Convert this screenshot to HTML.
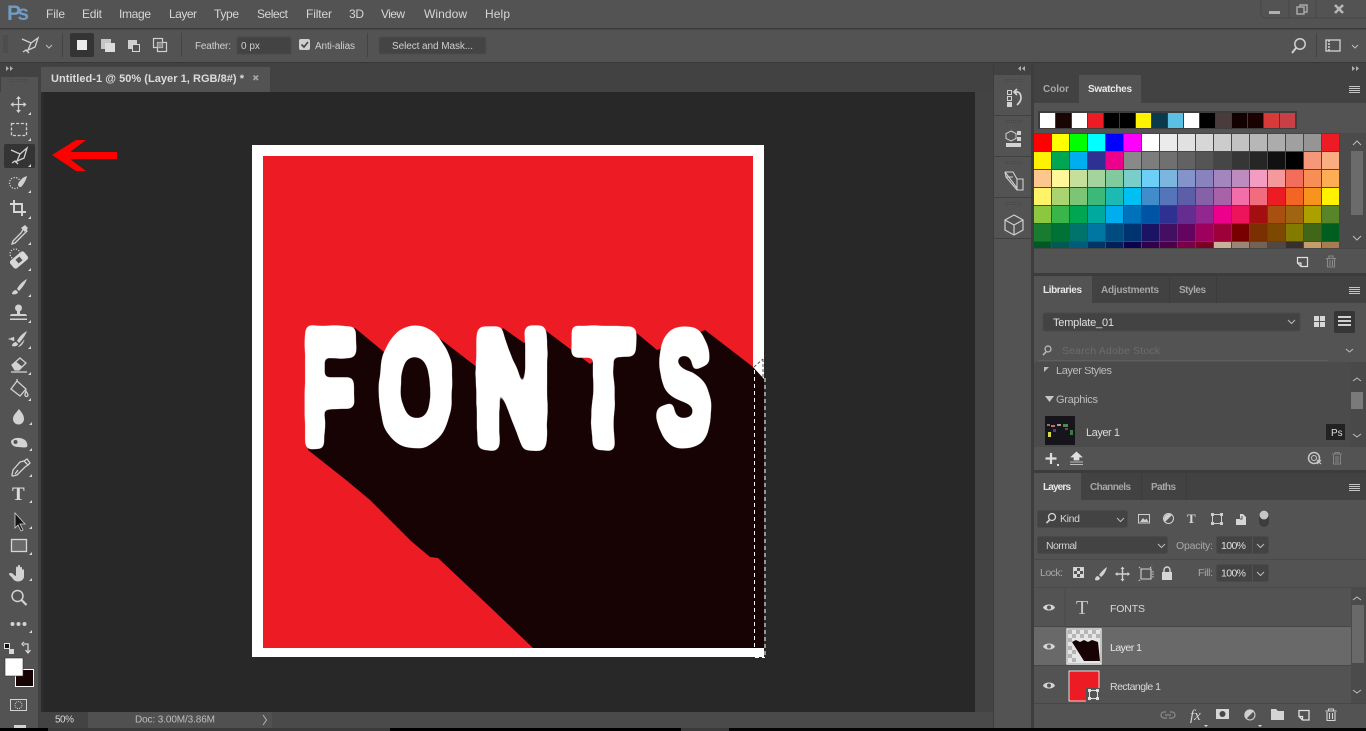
<!DOCTYPE html>
<html><head><meta charset="utf-8"><title>Photoshop</title>
<style>
html,body{margin:0;padding:0;background:#535353;overflow:hidden}
svg{display:block;position:absolute;left:0;top:0}
text{font-family:"Liberation Sans",sans-serif;font-size:11px;fill:#d4d4d4}
.m{font-size:12px;fill:#d6d6d6}
.o{font-size:10px;fill:#cfcfcf}
.d{font-size:10px;font-weight:bold;fill:#a6a6a6}
.a{font-size:10px;font-weight:bold;fill:#e8e8e8}
.i{fill:none;stroke:#d2d2d2;stroke-width:1.3}
.f{fill:#d2d2d2}
.c{fill:none;stroke:#bdbdbd;stroke-width:1}
.L{font-size:160px;font-weight:bold;fill:#fff;stroke:#fff;stroke-width:14px;stroke-linejoin:round}
</style></head><body>
<svg width="1366" height="731" viewBox="0 0 1366 731" xmlns="http://www.w3.org/2000/svg">
<defs>
<filter id="w" x="280" y="300" width="460" height="170" filterUnits="userSpaceOnUse" color-interpolation-filters="sRGB">
<feTurbulence type="fractalNoise" baseFrequency="0.03" numOctaves="2" seed="4" result="n"/>
<feDisplacementMap in="SourceGraphic" in2="n" scale="5" xChannelSelector="R" yChannelSelector="G" result="d"/>
<feGaussianBlur in="d" stdDeviation="2.6"/>
<feComponentTransfer><feFuncA type="linear" slope="10" intercept="-4.5"/></feComponentTransfer>
</filter>
</defs>
<!-- base -->
<rect width="1366" height="731" fill="#535353"/>
<rect x="0" y="28" width="1366" height="1.5" fill="#3c3c3c"/>
<rect x="0" y="62" width="1366" height="1.5" fill="#383838"/>
<rect x="0" y="63" width="1033" height="29" fill="#424242"/>
<rect x="0" y="63" width="38" height="14" fill="#424242"/>
<rect x="1" y="77" width="37" height="651" fill="#535353"/>
<rect x="38" y="77" width="3" height="651" fill="#424242"/>
<rect x="41" y="92" width="934" height="620" fill="#282828"/>
<rect x="41" y="92" width="3" height="620" fill="#2c2c2c"/>
<rect x="975" y="92" width="18" height="620" fill="#434343"/>
<rect x="41" y="67" width="229" height="25" fill="#535353"/>
<rect x="41" y="712" width="47" height="16" fill="#434343"/>
<rect x="88" y="712" width="184" height="16" fill="#505050"/>
<rect x="272" y="712" width="721" height="16" fill="#4a4a4a"/>
<!-- menu -->
<text x="7" y="20" style="font-size:21px;font-weight:bold;fill:#6f9cc4" textLength="22">Ps</text>
<text class="m" x="46" y="18" textLength="19">File</text>
<text class="m" x="82" y="18" textLength="20">Edit</text>
<text class="m" x="119" y="18" textLength="32">Image</text>
<text class="m" x="169" y="18" textLength="28">Layer</text>
<text class="m" x="214" y="18" textLength="25">Type</text>
<text class="m" x="257" y="18" textLength="31">Select</text>
<text class="m" x="306" y="18" textLength="26">Filter</text>
<text class="m" x="349" y="18" textLength="15">3D</text>
<text class="m" x="381" y="18" textLength="24">View</text>
<text class="m" x="424" y="18" textLength="43">Window</text>
<text class="m" x="485" y="18" textLength="25">Help</text>
<!-- window controls -->
<path d="M1261 0V13a5 5 0 0 0 5 5H1366M1289 0V18M1316 0V18" fill="none" stroke="#474747"/>
<rect x="1269" y="11" width="11" height="3" fill="#b0b0b0"/>
<path d="M1297 7h7v7h-7zM1300 7V5h7v7h-3" fill="none" stroke="#a8a8a8" stroke-width="1.5"/>
<path d="M1335 5l8 8M1343 5l-8 8" stroke="#b5b5b5" stroke-width="2.6"/>
<!-- options bar -->
<path d="M3 36h5M3 38h5M3 40h5M3 42h5M3 44h5M3 46h5M3 48h5M3 50h5M3 52h5" stroke="#474747"/>
<path d="M22 39l9 4 7-5-3 9-9 4M31 43l-3 7M23 52l3-2 3 3" class="i" stroke-width="1.1"/>
<path d="M46 45l3 3 3-3" class="c"/>
<rect x="62" y="33" width="1" height="24" fill="#434343"/>
<rect x="70" y="33" width="24" height="24" rx="2" fill="#343434"/>
<rect x="77" y="40" width="10" height="10" fill="#ececec"/>
<rect x="101" y="39" width="10" height="10" fill="#c6c6c6"/>
<rect x="105" y="43" width="10" height="9" fill="#dcdcdc"/>
<rect x="128" y="40" width="9" height="9" fill="#d0d0d0"/>
<rect x="132.500" y="44.500" width="7" height="7" fill="#535353" stroke="#d8d8d8"/>
<rect x="153.500" y="38.500" width="9" height="9" fill="none" stroke="#d0d0d0" stroke-width="1.2"/>
<rect x="157.500" y="42.500" width="9" height="9" fill="none" stroke="#d0d0d0" stroke-width="1.2"/>
<rect x="157.500" y="42.500" width="5" height="5" fill="#8a8a8a"/>
<rect x="181" y="33" width="1" height="24" fill="#434343"/>
<text class="o" x="195" y="49" textLength="36">Feather:</text>
<rect x="237" y="37" width="54" height="17" rx="2" fill="#434343" stroke="#4a4a4a"/>
<text class="o" x="241" y="49">0 px</text>
<rect x="299" y="39" width="11" height="11" rx="2" fill="#cfcfcf"/>
<path d="M301.500 44.500l2.500 2.500 4-5" fill="none" stroke="#454545" stroke-width="1.6"/>
<text class="o" x="315" y="49" textLength="40">Anti-alias</text>
<rect x="367" y="33" width="1" height="24" fill="#434343"/>
<rect x="379" y="37" width="107" height="17" rx="2" fill="#444444" stroke="#4c4c4c"/>
<text class="o" x="392" y="49" textLength="81">Select and Mask...</text>
<circle cx="1300" cy="44" r="5.200" fill="none" stroke="#cfcfcf" stroke-width="1.500"/>
<path d="M1296 48l-4 5" stroke="#cfcfcf" stroke-width="2"/>
<rect x="1316" y="33" width="1" height="24" fill="#434343"/>
<rect x="1326" y="40" width="14" height="11" fill="none" stroke="#d4d4d4" stroke-width="1.3"/>
<path d="M1329 40v11" stroke="#d4d4d4" stroke-width="1.5" stroke-dasharray="2 1"/>
<path d="M1352 45l3 3 3-3" class="c"/>
<!-- arrows strip -->
<path d="M6 66l3 2.500-3 2.500zM10 66l3 2.500-3 2.500z" fill="#b0b0b0"/>
<path d="M1352 66l3 2.500-3 2.500zM1356 66l3 2.500-3 2.500z" fill="#b0b0b0"/>
<path d="M10 79.500h18M10 81.500h18" stroke="#474747" stroke-dasharray="1 1"/>
<!-- tab -->
<text x="51" y="82" style="font-size:11px;font-weight:bold;fill:#dcdcdc" textLength="193">Untitled-1 @ 50% (Layer 1, RGB/8#) *</text>
<path d="M253.500 75.500l4.500 4.500M258 75.500l-4.500 4.500" stroke="#a4a4a4" stroke-width="1.700"/>
<!-- canvas -->
<rect x="252" y="145" width="512" height="512" fill="#fff"/>
<rect x="263" y="156" width="490" height="492" fill="#ed1c24"/>
<polygon fill="#170204" points="308,450 346,480 370,500 411,541 430,557 438,558 490,607 533,648 764,648 764,379 753,367 705,330 657,350 633,330 590,364 545,330 524,343 503,328 478,368 430,331 384,352 355,328 320,340"/>
<g filter="url(#w)">
<text class="L" transform="translate(329,443) scale(.53,1)" text-anchor="middle">F</text>
<text class="L" transform="translate(415.500,441) scale(.59,.97)" text-anchor="middle">O</text>
<text class="L" transform="translate(512,443) scale(.65,1)" text-anchor="middle">N</text>
<text class="L" transform="translate(603.500,443) scale(.6,1)" text-anchor="middle">T</text>
<text class="L" transform="translate(684.500,441) scale(.5,.97)" text-anchor="middle">S</text>
</g>
<path d="M754.500 370V657M765 378V657M755 657.500H765" fill="none" stroke="#fff" stroke-dasharray="4 3"/>
<path d="M754 367l9-8M763 359v18" fill="none" stroke="#555" stroke-dasharray="3 2"/>
<!-- red arrow -->
<polygon fill="#fe0000" points="52,155 76,140 86,140 70,152 117,152 117,159 70,159 86,171 76,171"/>
<!-- tools -->
<rect x="4" y="144" width="31" height="24" rx="2" fill="#343434"/>
<path d="M18.500 97v15M11 104.500h15" class="i" stroke-width="2"/>
<path d="M18.500 96l-2.500 3h5zM18.500 113l-2.500-3h5zM10.500 104.500l3-2.500v5zM26.500 104.500l-3-2.500v5z" class="f"/>
<rect x="11.500" y="123.500" width="15" height="12" fill="none" stroke="#d2d2d2" stroke-width="1.300" stroke-dasharray="3 1.700"/>
<path d="M11 150l9 4 7-6-3 10-9 4M20 154l-3 7M12 163l3-2 3 3" class="i" stroke-width="1.1"/>
<circle cx="15" cy="183" r="5.500" fill="none" stroke="#e0e0e0" stroke-width="1.200" stroke-dasharray="1.200 1.500"/>
<path d="M27 176c-4 1-7 4-9 8 0 2 1 3 3 3 3-3 5-7 6-11z" class="f"/>
<path d="M14 200v12h12M10 204h12v12" fill="none" stroke="#d8d8d8" stroke-width="1.900"/>
<path d="M24 228l3 3-3 3-1 1-8 8-3 1 1-3 8-8z" fill="none" stroke="#d4d4d4" stroke-width="1.300"/>
<path d="M21 228l4-3 3 3-3 4z" class="f"/>
<circle cx="15" cy="254" r="5" fill="none" stroke="#e0e0e0" stroke-width="1.100" stroke-dasharray="1.200 1.500"/>
<rect x="10" y="255" width="18" height="10" rx="2.500" fill="#d8d8d8" transform="rotate(-40 19 260)"/>
<rect x="16.500" y="257.500" width="5" height="5" fill="#535353" transform="rotate(-40 19 260)"/>
<path d="M27 279c-4 2-8 6-10 10l2 2c3-3 6-7 8-12zM16 290c-2 0-4 2-4 4 2 1 6 0 6-2z" class="f"/>
<circle cx="18.500" cy="308" r="3.500" class="f"/>
<path d="M17 310h3v4h5c1 0 2 1 2 2H10c0-1 1-2 2-2h5zM10 318.500h17v1.500H10z" class="f"/>
<path d="M27 331c-4 2-8 6-10 10l2 2c3-3 6-7 8-12zM16 342c-2 0-4 2-4 4 2 1 6 0 6-2z" class="f"/>
<path d="M9 339l5-2v4zM24 340a9 9 0 0 1-6 7" fill="#d2d2d2" stroke="#d2d2d2" stroke-dasharray="1 1" stroke-width=".8"/>
<path d="M12 365l8-7 6 5-7 7h-4z" class="i"/>
<path d="M12 365l4-3.500 6 5-3 3.500h-4z" class="f"/>
<path d="M11 372h16" class="i"/>
<path d="M17 381l9 8-6 7-9-7z" class="i"/>
<path d="M17 381v-2M26 391c1 2 2 3 2 4a1.500 1.500 0 0 1-3 0c0-1 0-2 1-4z" class="i"/>
<path d="M19 409c3 4 5 6 5 10a5.500 5.500 0 0 1-11 0c0-4 3-6 6-10z" class="f"/>
<path d="M11 441c3-4 10-4 14-1 2 2 3 5 2 7-3 1-6 0-9 0-4 0-7-2-7-6z" class="f"/>
<circle cx="15.500" cy="442" r="2" fill="#535353"/>
<path d="M24 461l4 4-3 2-8 8-4 1c-1 0-1 0-1-1l1-5 7-8z" class="i"/>
<path d="M15 474l3-4M24 461l3-2 3 4-2 2" class="i"/>
<text x="12" y="500" style="font-family:'Liberation Serif',serif;font-size:19px;font-weight:bold;fill:#dadada">T</text>
<path d="M15 513v15l3-3 3 6 2-1-3-6h5z" fill="#151515" stroke="#d4d4d4" stroke-width=".8"/>
<rect x="11.500" y="539.500" width="15" height="12" fill="#6a6a6a" stroke="#d6d6d6" stroke-width="1.300"/>
<path d="M12 573c1 1 3 3 4 3v-8c0-2 2-2 2 0v-2c0-1.500 2-1.500 2 0v2c0-1.500 2-1.500 2 0v2c0-1 2-1 2 .5v6c0 3-3 5-6 5s-5-2-6-4l-3-3c0-2 2-2 3-1z" class="f"/>
<circle cx="17.500" cy="596" r="5.500" fill="none" stroke="#d2d2d2" stroke-width="1.500"/>
<path d="M21.500 600l5 5" stroke="#d2d2d2" stroke-width="2.200"/>
<circle cx="12.500" cy="624" r="2" class="f"/><circle cx="18.500" cy="624" r="2" class="f"/><circle cx="24.500" cy="624" r="2" class="f"/>
<g fill="#d8d8d8">
<path d="M31 112l-3 3h3zM31 138l-3 3h3zM31 164l-3 3h3zM31 190l-3 3h3zM31 216l-3 3h3zM31 242l-3 3h3zM31 268l-3 3h3zM31 294l-3 3h3zM31 320l-3 3h3zM31 346l-3 3h3zM31 372l-3 3h3zM31 398l-3 3h3zM32 422l-3 3h3zM32 448l-3 3h3zM32 474l-3 3h3zM32 500l-3 3h3zM32 526l-3 3h3zM32 552l-3 3h3zM32 578l-3 3h3zM32 630l-3 3h3z"/>
</g>
<rect x="9" y="649" width="5" height="5" fill="#d8d8d8"/>
<path d="M4.500 643.500h5v5h-5z" fill="#111" stroke="#e2e2e2"/>
<path d="M24 644h4v8M25.500 650l2.500 3 2.500-3M24 642l-2 2 2 2" fill="none" stroke="#d6d6d6" stroke-width="1.300"/>
<rect x="15.500" y="669.500" width="18" height="17" fill="#170204" stroke="#fff"/>
<rect x="5" y="658" width="18" height="18" fill="#fff" stroke="#333" stroke-width=".6"/>
<rect x="10.500" y="699.500" width="16" height="11" fill="none" stroke="#d2d2d2"/>
<circle cx="18.500" cy="705" r="3.500" fill="none" stroke="#d2d2d2" stroke-dasharray="1 1"/>
<rect x="14" y="725" width="12" height="3" fill="#d2d2d2"/>
<!-- status -->
<text class="o" x="55" y="722.500" style="fill:#d8d8d8" textLength="19">50%</text>
<text class="o" x="135" y="722.500" style="fill:#bdbdbd" textLength="80">Doc: 3.00M/3.86M</text>
<path d="M263 715l3.500 5-3.500 5" fill="none" stroke="#b4b4b4"/>
<!-- dock -->
<rect x="993" y="63" width="40" height="665" fill="#535353"/>
<rect x="993" y="63" width="40" height="12" fill="#424242"/>
<rect x="1031" y="63" width="3" height="665" fill="#3d3d3d"/>
<path d="M993.500 63V728" stroke="#3d3d3d"/>
<path d="M994 115.500h37M994 156.500h37M994 197.500h37M994 238.500h37" stroke="#404040"/>
<path d="M1005 79.500h18M1005 81.500h18M1005 120.500h18M1005 122.500h18M1005 161.500h18M1005 163.500h18M1005 202.500h18M1005 204.500h18" stroke="#474747" stroke-dasharray="1 1"/>
<path d="M1025 66l-3 2.500 3 2.500zM1021 66l-3 2.500 3 2.500z" fill="#b0b0b0"/>
<rect x="1007.500" y="90.500" width="4" height="4" fill="none" stroke="#d2d2d2"/><rect x="1007.500" y="96.500" width="4" height="4" fill="none" stroke="#d2d2d2"/><rect x="1007" y="102" width="5" height="5" fill="#d2d2d2"/>
<path d="M1015 92h3c2 1 3 3 3 6 0 3-2 5-4 7M1017 89l-3 3 3 3" fill="none" stroke="#d2d2d2" stroke-width="1.700"/>
<path d="M1011 131l5 2.500v5l-5 2.500-5-2.500v-5z" fill="none" stroke="#d2d2d2"/>
<rect x="1017" y="131" width="4" height="4" fill="#d2d2d2"/><rect x="1017" y="137" width="4" height="4" fill="#d2d2d2"/>
<rect x="1006" y="143" width="15" height="4" fill="#d2d2d2"/>
<path d="M1005 172h8l4 7M1005 172l1 5 11 13h6v-11h-6v11M1005 172l12 16M1006 177l7 0" fill="none" stroke="#d2d2d2" stroke-width="1.100"/>
<path d="M1014 215l9 5v10l-9 5-9-5v-10zM1005 220l9 5 9-5M1014 225v10" fill="none" stroke="#cfcfcf" stroke-width="1.200"/>
<!-- panels general -->
<rect x="1034" y="63" width="332" height="12" fill="#424242"/>
<path d="M1352 66l3 2.500-3 2.500zM1356 66l3 2.500-3 2.500z" fill="#b0b0b0"/>
<rect x="1034" y="75" width="332" height="28" fill="#424242"/>
<rect x="1079" y="75" width="62" height="28" fill="#535353"/>
<text class="d" x="1043" y="92" textLength="26">Color</text>
<text class="a" x="1088" y="92" textLength="44">Swatches</text>
<path d="M1349 86.500h11M1349 88.500h11M1349 90.500h11M1349 92.500h11" stroke="#c4c4c4"/>
<rect x="1038" y="111" width="259" height="18" fill="#3d3d3d"/>
<g>
<rect x="1040" y="113" width="15" height="15" fill="#fff"/><rect x="1056" y="113" width="15" height="15" fill="#1a0505"/><rect x="1072" y="113" width="15" height="15" fill="#fff"/><rect x="1088" y="113" width="15" height="15" fill="#ed1c24"/><rect x="1104" y="113" width="15" height="15" fill="#000"/><rect x="1120" y="113" width="15" height="15" fill="#000"/><rect x="1136" y="113" width="15" height="15" fill="#fff200"/><rect x="1152" y="113" width="15" height="15" fill="#0c3a4d"/><rect x="1168" y="113" width="15" height="15" fill="#5cc0e5"/><rect x="1184" y="113" width="15" height="15" fill="#fff"/><rect x="1200" y="113" width="15" height="15" fill="#000"/><rect x="1216" y="113" width="15" height="15" fill="#4a3c3c"/><rect x="1232" y="113" width="15" height="15" fill="#130000"/><rect x="1248" y="113" width="15" height="15" fill="#1a0202"/><rect x="1264" y="113" width="15" height="15" fill="#d83a3a"/><rect x="1280" y="113" width="15" height="15" fill="#c84046"/>
</g>
<rect x="1034" y="133" width="306" height="115" fill="#474747"/>
<g>
<rect x="1034" y="134" width="17" height="17" fill="#ff0000"/><rect x="1052" y="134" width="17" height="17" fill="#ffff00"/><rect x="1070" y="134" width="17" height="17" fill="#00ff00"/><rect x="1088" y="134" width="17" height="17" fill="#00ffff"/><rect x="1106" y="134" width="17" height="17" fill="#0000ff"/><rect x="1124" y="134" width="17" height="17" fill="#ff00ff"/><rect x="1142" y="134" width="17" height="17" fill="#ffffff"/><rect x="1160" y="134" width="17" height="17" fill="#ebebeb"/><rect x="1178" y="134" width="17" height="17" fill="#e1e1e1"/><rect x="1196" y="134" width="17" height="17" fill="#d7d7d7"/><rect x="1214" y="134" width="17" height="17" fill="#cccccc"/><rect x="1232" y="134" width="17" height="17" fill="#c2c2c2"/><rect x="1250" y="134" width="17" height="17" fill="#b7b7b7"/><rect x="1268" y="134" width="17" height="17" fill="#acacac"/><rect x="1286" y="134" width="17" height="17" fill="#a0a0a0"/><rect x="1304" y="134" width="17" height="17" fill="#959595"/><rect x="1322" y="134" width="17" height="17" fill="#ed1c24"/>
<rect x="1034" y="152" width="17" height="17" fill="#fff200"/><rect x="1052" y="152" width="17" height="17" fill="#00a651"/><rect x="1070" y="152" width="17" height="17" fill="#00aeef"/><rect x="1088" y="152" width="17" height="17" fill="#2e3192"/><rect x="1106" y="152" width="17" height="17" fill="#ec008c"/><rect x="1124" y="152" width="17" height="17" fill="#898989"/><rect x="1142" y="152" width="17" height="17" fill="#7d7d7d"/><rect x="1160" y="152" width="17" height="17" fill="#707070"/><rect x="1178" y="152" width="17" height="17" fill="#626262"/><rect x="1196" y="152" width="17" height="17" fill="#555555"/><rect x="1214" y="152" width="17" height="17" fill="#464646"/><rect x="1232" y="152" width="17" height="17" fill="#363636"/><rect x="1250" y="152" width="17" height="17" fill="#262626"/><rect x="1268" y="152" width="17" height="17" fill="#111111"/><rect x="1286" y="152" width="17" height="17" fill="#000000"/><rect x="1304" y="152" width="17" height="17" fill="#f7977a"/><rect x="1322" y="152" width="17" height="17" fill="#fbad82"/>
<rect x="1034" y="170" width="17" height="17" fill="#fdc68c"/><rect x="1052" y="170" width="17" height="17" fill="#fff799"/><rect x="1070" y="170" width="17" height="17" fill="#c6df9c"/><rect x="1088" y="170" width="17" height="17" fill="#a4d49d"/><rect x="1106" y="170" width="17" height="17" fill="#81ca9d"/><rect x="1124" y="170" width="17" height="17" fill="#7bcdc9"/><rect x="1142" y="170" width="17" height="17" fill="#6ccff7"/><rect x="1160" y="170" width="17" height="17" fill="#7cb5dd"/><rect x="1178" y="170" width="17" height="17" fill="#8493ca"/><rect x="1196" y="170" width="17" height="17" fill="#8882be"/><rect x="1214" y="170" width="17" height="17" fill="#a286bd"/><rect x="1232" y="170" width="17" height="17" fill="#bc8cbf"/><rect x="1250" y="170" width="17" height="17" fill="#f49bc1"/><rect x="1268" y="170" width="17" height="17" fill="#f5999d"/><rect x="1286" y="170" width="17" height="17" fill="#f26d5b"/><rect x="1304" y="170" width="17" height="17" fill="#f68e55"/><rect x="1322" y="170" width="17" height="17" fill="#fdae55"/>
<rect x="1034" y="188" width="17" height="17" fill="#fff468"/><rect x="1052" y="188" width="17" height="17" fill="#aad372"/><rect x="1070" y="188" width="17" height="17" fill="#7cc576"/><rect x="1088" y="188" width="17" height="17" fill="#3cb878"/><rect x="1106" y="188" width="17" height="17" fill="#1bbbb4"/><rect x="1124" y="188" width="17" height="17" fill="#00bff3"/><rect x="1142" y="188" width="17" height="17" fill="#438ccb"/><rect x="1160" y="188" width="17" height="17" fill="#5574b9"/><rect x="1178" y="188" width="17" height="17" fill="#5c5fa8"/><rect x="1196" y="188" width="17" height="17" fill="#8561a8"/><rect x="1214" y="188" width="17" height="17" fill="#a863a8"/><rect x="1232" y="188" width="17" height="17" fill="#f26ea8"/><rect x="1250" y="188" width="17" height="17" fill="#f16d7e"/><rect x="1268" y="188" width="17" height="17" fill="#ed1c24"/><rect x="1286" y="188" width="17" height="17" fill="#f26522"/><rect x="1304" y="188" width="17" height="17" fill="#f7941d"/><rect x="1322" y="188" width="17" height="17" fill="#fff200"/>
<rect x="1034" y="206" width="17" height="17" fill="#8dc63f"/><rect x="1052" y="206" width="17" height="17" fill="#39b54a"/><rect x="1070" y="206" width="17" height="17" fill="#00a651"/><rect x="1088" y="206" width="17" height="17" fill="#00a99d"/><rect x="1106" y="206" width="17" height="17" fill="#00aeef"/><rect x="1124" y="206" width="17" height="17" fill="#0072bc"/><rect x="1142" y="206" width="17" height="17" fill="#0054a6"/><rect x="1160" y="206" width="17" height="17" fill="#2e3192"/><rect x="1178" y="206" width="17" height="17" fill="#662d91"/><rect x="1196" y="206" width="17" height="17" fill="#92278f"/><rect x="1214" y="206" width="17" height="17" fill="#ec008c"/><rect x="1232" y="206" width="17" height="17" fill="#ed145b"/><rect x="1250" y="206" width="17" height="17" fill="#a30e10"/><rect x="1268" y="206" width="17" height="17" fill="#a7500f"/><rect x="1286" y="206" width="17" height="17" fill="#a16410"/><rect x="1304" y="206" width="17" height="17" fill="#aba000"/><rect x="1322" y="206" width="17" height="17" fill="#588528"/>
<rect x="1034" y="224" width="17" height="17" fill="#197b30"/><rect x="1052" y="224" width="17" height="17" fill="#007236"/><rect x="1070" y="224" width="17" height="17" fill="#00746b"/><rect x="1088" y="224" width="17" height="17" fill="#0076a3"/><rect x="1106" y="224" width="17" height="17" fill="#004b80"/><rect x="1124" y="224" width="17" height="17" fill="#003471"/><rect x="1142" y="224" width="17" height="17" fill="#1b1464"/><rect x="1160" y="224" width="17" height="17" fill="#440e62"/><rect x="1178" y="224" width="17" height="17" fill="#630460"/><rect x="1196" y="224" width="17" height="17" fill="#9e005d"/><rect x="1214" y="224" width="17" height="17" fill="#9e0039"/><rect x="1232" y="224" width="17" height="17" fill="#790000"/><rect x="1250" y="224" width="17" height="17" fill="#7a3000"/><rect x="1268" y="224" width="17" height="17" fill="#7d4900"/><rect x="1286" y="224" width="17" height="17" fill="#827b00"/><rect x="1304" y="224" width="17" height="17" fill="#406618"/><rect x="1322" y="224" width="17" height="17" fill="#005e20"/>
<rect x="1034" y="242" width="17" height="6" fill="#005826"/><rect x="1052" y="242" width="17" height="6" fill="#005952"/><rect x="1070" y="242" width="17" height="6" fill="#005b7f"/><rect x="1088" y="242" width="17" height="6" fill="#003663"/><rect x="1106" y="242" width="17" height="6" fill="#002157"/><rect x="1124" y="242" width="17" height="6" fill="#0d004c"/><rect x="1142" y="242" width="17" height="6" fill="#32004b"/><rect x="1160" y="242" width="17" height="6" fill="#4b0049"/><rect x="1178" y="242" width="17" height="6" fill="#7b0046"/><rect x="1196" y="242" width="17" height="6" fill="#7a0026"/><rect x="1214" y="242" width="17" height="6" fill="#c7b299"/><rect x="1232" y="242" width="17" height="6" fill="#998675"/><rect x="1250" y="242" width="17" height="6" fill="#736357"/><rect x="1268" y="242" width="17" height="6" fill="#534741"/><rect x="1286" y="242" width="17" height="6" fill="#362f2d"/><rect x="1304" y="242" width="17" height="6" fill="#c69c6d"/><rect x="1322" y="242" width="17" height="6" fill="#a77c50"/>
</g>
<rect x="1340" y="133" width="26" height="115" fill="#4b4b4b"/>
<rect x="1351" y="151" width="12" height="64" fill="#6b6b6b"/>
<path d="M1353 145l4-4 4 4M1353 236l4 4 4-4" class="c" stroke="#7a7a7a"/>
<path d="M1034 248.500h332" stroke="#474747"/>
<path d="M1297.500 257.500h10v9h-6.500l-3.500-3.500zM1301 266v-3h-3.500" fill="none" stroke="#e0e0e0" stroke-width="1.200"/>
<path d="M1326 258.500h10M1329 258v-2h4v2M1327.500 259v8h7v-8M1330 260v6M1332.500 260v6" fill="none" stroke="#8a8a8a" stroke-width="1.100"/>
<rect x="1034" y="273" width="332" height="3" fill="#3c3c3c"/>
<!-- libraries -->
<rect x="1034" y="276" width="332" height="27" fill="#424242"/>
<rect x="1034" y="276" width="58" height="27" fill="#535353"/>
<path d="M1169.500 276v27M1216.500 276v27" stroke="#3c3c3c"/>
<text class="a" x="1043" y="293" textLength="39">Libraries</text>
<text class="d" x="1101" y="293" textLength="58">Adjustments</text>
<text class="d" x="1179" y="293" textLength="27">Styles</text>
<path d="M1349 287.500h11M1349 289.500h11M1349 291.500h11M1349 293.500h11" stroke="#c4c4c4"/>
<rect x="1043" y="313" width="257" height="18" rx="2" fill="#434343" stroke="#4a4a4a"/>
<text x="1053" y="326" style="font-size:11px;fill:#e0e0e0" textLength="61">Template_01</text>
<path d="M1288 320l3.500 3.500 3.500-3.500" class="c" stroke="#a0a0a0"/>
<path d="M1314 316h5v5h-5zM1320 316h5v5h-5zM1314 322h5v5h-5zM1320 322h5v5h-5z" fill="#d8d8d8"/>
<rect x="1334" y="311" width="21" height="22" rx="2" fill="#363636"/>
<path d="M1338 317h13M1338 321h13M1338 325h13" stroke="#e6e6e6" stroke-width="1.800"/>
<circle cx="1048" cy="349" r="3" fill="none" stroke="#c0c0c0" stroke-width="1.200"/>
<path d="M1046 352l-3 3" stroke="#c0c0c0" stroke-width="1.500"/>
<text x="1062" y="354" style="font-size:10.500px;fill:#6c6c6c" textLength="98">Search Adobe Stock</text>
<path d="M1346 349l3.500 3 3.500-3" class="c" stroke="#9a9a9a"/>
<path d="M1038 360.500h290" stroke="#5e5e5e"/>
<rect x="1034" y="362" width="332" height="85" fill="#4b4b4b"/>
<svg x="1034" y="367" width="320" height="20" viewBox="0 0 320 20">
<text x="22" y="7" style="font-size:11px;fill:#bbb" textLength="56">Layer Styles</text>
<path d="M10 0l5 0-5 5z" fill="#bbb"/>
</svg>
<rect x="1351" y="362" width="15" height="85" fill="#494949"/>
<path d="M1353 381l4-3 4 3M1353 434l4 3 4-3" class="c" stroke="#7a7a7a"/>
<rect x="1351" y="392" width="12" height="17" fill="#7a7a7a"/>
<path d="M1045 396h9l-4.500 6z" fill="#c6c6c6"/>
<text x="1056" y="403" style="font-size:11px;fill:#bdbdbd" textLength="42">Graphics</text>
<rect x="1045" y="416" width="30" height="29" fill="#15151b"/>
<g>
<rect x="1047" y="424" width="3" height="2" fill="#8a6a88"/><rect x="1051" y="425" width="4" height="2" fill="#c86b6b"/><rect x="1057" y="424" width="4" height="2" fill="#ad9a90"/><rect x="1063" y="424" width="5" height="3" fill="#4a8a55"/><rect x="1048" y="432" width="3" height="5" fill="#d8d84a"/><rect x="1053" y="429" width="3" height="3" fill="#444488"/><rect x="1070" y="430" width="3" height="5" fill="#3a7a40"/><rect x="1065" y="428" width="3" height="2" fill="#992f55"/>
</g>
<text x="1086" y="436" style="font-size:11px;fill:#dcdcdc" textLength="34">Layer 1</text>
<rect x="1326" y="424" width="19" height="16" fill="#222"/>
<text x="1331" y="436" style="font-size:10px;fill:#ddd">Ps</text>
<rect x="1034" y="447" width="332" height="23" fill="#535353"/>
<path d="M1051 453v11M1045.500 458.500h11" stroke="#dedede" stroke-width="2.200"/>
<rect x="1057" y="464" width="2" height="2" fill="#ddd"/>
<path d="M1076.500 452l5.500 5h-3v3h-5v-3h-3zM1070 462h13M1070 464.500h13" fill="#dedede" stroke="#dedede" stroke-width=".7"/>
<circle cx="1314" cy="458" r="5.500" fill="none" stroke="#c8c8c8" stroke-width="1.500"/><circle cx="1314" cy="458" r="2.500" fill="none" stroke="#c8c8c8"/>
<path d="M1317 460l4 4M1321 460l-4 4" stroke="#c8c8c8" stroke-width="1.200"/>
<path d="M1332 454h10M1335 454v-1.500h4v1.500M1333.500 455v9h7v-9M1336 456v7M1338 456v7" fill="none" stroke="#858585"/>
<rect x="1034" y="470" width="332" height="3" fill="#3c3c3c"/>
<!-- layers -->
<rect x="1034" y="473" width="332" height="27" fill="#424242"/>
<rect x="1034" y="473" width="47" height="27" fill="#535353"/>
<path d="M1141.500 473v27M1186.500 473v27" stroke="#3c3c3c"/>
<text class="a" x="1043" y="490" textLength="28">Layers</text>
<text class="d" x="1090" y="490" textLength="41">Channels</text>
<text class="d" x="1151" y="490" textLength="25">Paths</text>
<path d="M1349 484.500h11M1349 486.500h11M1349 488.500h11M1349 490.500h11" stroke="#c4c4c4"/>
<rect x="1037.500" y="510.500" width="90" height="17" rx="2" fill="#434343" stroke="#4a4a4a"/>
<circle cx="1052" cy="517" r="3.500" fill="none" stroke="#d4d4d4" stroke-width="1.300"/>
<path d="M1049.500 520l-3 3" stroke="#d4d4d4" stroke-width="1.600"/>
<text x="1060" y="522" style="font-size:10.500px;fill:#d6d6d6" textLength="20">Kind</text>
<path d="M1117 518l3.500 3.500 3.500-3.500" class="c"/>
<rect x="1138.500" y="514.500" width="11" height="8.500" fill="none" stroke="#cdcdcd"/>
<path d="M1140 522l3-4 2 2 1.500-1.500 2 3.500z" fill="#cdcdcd"/>
<circle cx="1168.500" cy="518.500" r="5" fill="none" stroke="#d0d0d0"/><path d="M1172 515a5 5 0 0 0-7 7z" fill="#d0d0d0"/>
<text x="1187" y="523" style="font-family:'Liberation Serif',serif;font-size:13px;font-weight:bold;fill:#d6d6d6">T</text>
<rect x="1212.500" y="514.500" width="9" height="9" fill="none" stroke="#cdcdcd"/>
<path d="M1211 513h3v3h-3zM1220 513h3v3h-3zM1211 522h3v3h-3zM1220 522h3v3h-3z" fill="#cdcdcd"/>
<path d="M1236 519h4v-5h3l3 3v8h-10z" fill="#d6d6d6"/><path d="M1240 519h2v-3" stroke="#535353" fill="none"/>
<rect x="1259" y="510" width="10" height="17" rx="5" fill="#3d3d3d"/><circle cx="1264" cy="515" r="4.500" fill="#c6c6c6"/>
<rect x="1037.500" y="536.500" width="130" height="17" rx="2" fill="#434343" stroke="#4a4a4a"/>
<text x="1046" y="549" style="font-size:10.500px;fill:#d2d2d2" textLength="31">Normal</text>
<path d="M1158 544l3.500 3.500 3.500-3.500" class="c"/>
<text x="1176" y="549" style="font-size:10.500px;fill:#a8a8a8" textLength="37">Opacity:</text>
<rect x="1216.500" y="536.500" width="52" height="17" rx="2" fill="#434343" stroke="#4a4a4a"/>
<path d="M1252.500 537v16" stroke="#535353"/>
<text x="1221" y="549" style="font-size:10.500px;fill:#dedede" textLength="25">100%</text>
<path d="M1257 544l3.500 3.500 3.500-3.500" class="c"/>
<path d="M1034 559.500h332M1034 587.500h332" stroke="#4a4a4a"/>
<text x="1040" y="576" style="font-size:10.500px;fill:#a8a8a8" textLength="23">Lock:</text>
<rect x="1073.500" y="567.500" width="10" height="10" fill="none" stroke="#d0d0d0"/>
<path d="M1074 568h3v3h-3zM1080 568h3v3h-3zM1077 571h3v3h-3zM1074 574h3v3h-3zM1080 574h3v3h-3z" fill="#d8d8d8"/>
<path d="M1107 567c-3 2-6 5-8 8l2 2c3-2 5-6 6-10zM1098 576c-2 0-3 2-3 4 2 1 5 0 5-2z" class="f"/>
<path d="M1122.500 568v12M1116.500 574h12" stroke="#d2d2d2" stroke-width="1.400"/>
<path d="M1122.500 566.500l-2 2.500h4zM1122.500 581.500l-2-2.500h4zM1115 574l2.500-2v4zM1130 574l-2.500-2v4z" class="f"/>
<path d="M1141 569h10v10h-10z" fill="none" stroke="#d0d0d0" stroke-width="1.100"/>
<path d="M1139 567l3 3M1150 568l2-2M1140 580l-2 1M1153 571v7" stroke="#d0d0d0" stroke-dasharray="1.500 1"/>
<rect x="1162" y="572" width="10" height="8" fill="#d6d6d6"/>
<path d="M1164 572v-2a3 3 0 0 1 6 0v2" fill="none" stroke="#d6d6d6" stroke-width="1.400"/>
<text x="1198" y="576" style="font-size:10.500px;fill:#a8a8a8" textLength="15">Fill:</text>
<rect x="1216.500" y="564.500" width="52" height="17" rx="2" fill="#434343" stroke="#4a4a4a"/>
<path d="M1252.500 565v16" stroke="#535353"/>
<text x="1221" y="576.500" style="font-size:10.500px;fill:#dedede" textLength="25">100%</text>
<path d="M1257 572l3.500 3.500 3.500-3.500" class="c"/>
<!-- layer rows -->
<rect x="1034" y="588" width="317" height="38" fill="#535353"/>
<path d="M1065 588v38" stroke="#4a4a4a"/>
<rect x="1034" y="627" width="317" height="38" fill="#696969"/>
<path d="M1034 626.500h317M1034 665.500h317M1034 703.500h332" stroke="#474747"/>
<rect x="1351" y="588" width="15" height="115" fill="#4b4b4b"/>
<rect x="1352" y="605" width="12" height="58" fill="#696969"/>
<path d="M1353 600l4-3 4 3M1353 690l4 3 4-3" class="c" stroke="#7a7a7a"/>
<path d="M1043 607.500c2-4 10-4 12 0-2 4-10 4-12 0zM1043 646.500c2-4 10-4 12 0-2 4-10 4-12 0zM1043 685.500c2-4 10-4 12 0-2 4-10 4-12 0z" fill="#d4d4d4"/>
<circle cx="1049" cy="607.500" r="2" fill="#535353"/><circle cx="1049" cy="646.500" r="2" fill="#696969"/><circle cx="1049" cy="685.500" r="2" fill="#535353"/>
<text x="1076" y="614" style="font-family:'Liberation Serif',serif;font-size:20px;fill:#c8c8c8">T</text>
<text x="1110" y="612" style="font-size:10.500px;fill:#d8d8d8" textLength="35">FONTS</text>
<rect x="1068" y="630" width="32" height="33" fill="#e6e6e6"/>
<path d="M1068 630h4v4h-4zM1076 630h4v4h-4zM1084 630h4v4h-4zM1092 630h4v4h-4zM1072 634h4v4h-4zM1080 634h4v4h-4zM1088 634h4v4h-4zM1096 634h4v4h-4zM1068 638h4v4h-4zM1068 646h4v4h-4zM1072 650h4v4h-4zM1068 654h4v4h-4zM1072 658h4v4h-4z" fill="#b5b5b5"/>
<polygon points="1072,642 1076,640 1080,642 1084,640 1088,642 1092,640 1098,642 1100,661 1084,661" fill="#170204"/>
<path d="M1067 629h34v35h-34z" fill="none" stroke="#fff" stroke-width="1.200"/>
<rect x="1069" y="671" width="30" height="30" fill="#ed1c24" stroke="#fff" stroke-width=".8"/>
<rect x="1086" y="688" width="14" height="14" fill="#535353"/>
<rect x="1089.500" y="690.500" width="8" height="8" fill="none" stroke="#e0e0e0"/>
<path d="M1088 689h3v3h-3zM1096 689h3v3h-3zM1088 697h3v3h-3zM1096 697h3v3h-3z" fill="#e0e0e0"/>
<text x="1110" y="651" style="font-size:10.500px;fill:#e8e8e8" textLength="32">Layer 1</text>
<text x="1110" y="690" style="font-size:10.500px;fill:#d8d8d8" textLength="51">Rectangle 1</text>
<!-- layer bottom bar -->
<g>
<path d="M1166 712h-2a3 3 0 0 0 0 6h3M1170 712h2a3 3 0 0 1 0 6h-3M1165 715h6" fill="none" stroke="#8a8a8a" stroke-width="1.200"/>
<text x="1190" y="720" style="font-family:'Liberation Serif',serif;font-size:15px;font-style:italic;fill:#d4d4d4">fx</text>
<path d="M1204 725h4l-2 2z" fill="#ddd"/>
<rect x="1216" y="709" width="13" height="10" fill="#d6d6d6"/><circle cx="1222.500" cy="714" r="3" fill="#454545"/>
<circle cx="1250" cy="715" r="5" fill="none" stroke="#d0d0d0"/><path d="M1254 711a5.500 5.500 0 0 0-8 8z" fill="#d0d0d0"/>
<path d="M1258 725h4l-2 2z" fill="#ddd"/>
<path d="M1271 709h5l2 2h6v9h-13z" fill="#d4d4d4"/>
<path d="M1299 710.500h10v9.500h-6.500l-3.500-3.500zM1302.500 720v-3.500h-3.500" fill="none" stroke="#e0e0e0" stroke-width="1.300"/>
<path d="M1325.500 711h11M1328.500 711v-2h5v2M1327 712v8.500h8V712M1329.500 713v6M1332.500 713v6" fill="none" stroke="#d4d4d4" stroke-width="1.100"/>
</g>
<!-- bottom black -->
<rect x="0" y="728" width="48" height="3" fill="#000"/>
<rect x="48" y="728" width="1318" height="3" fill="#3a3a3a"/>
<rect x="390" y="728" width="291" height="3" fill="#000"/>
<rect x="729" y="728" width="637" height="3" fill="#050505"/>
</svg>
</body></html>
